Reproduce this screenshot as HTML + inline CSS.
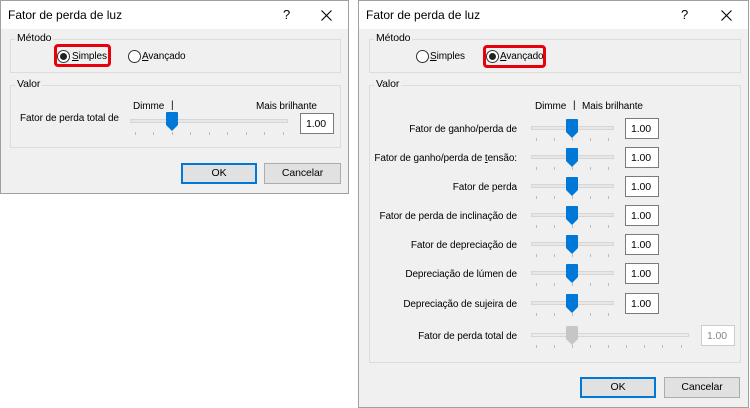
<!DOCTYPE html>
<html><head><meta charset="utf-8"><style>
*{margin:0;padding:0;box-sizing:border-box}
body{width:750px;height:408px;background:#fff;position:relative;overflow:hidden;font-family:"Liberation Sans",sans-serif;font-size:10px;letter-spacing:-0.1px;color:#000}
.a{position:absolute;white-space:nowrap}
.dlg{position:absolute;background:#f0f0f0;border:1px solid #a0a0a0}
.tb{position:absolute;left:0;top:0;right:0;height:28px;background:#fff}
.title{position:absolute;left:7px;top:7px;font-size:12px;letter-spacing:0}
.grp{position:absolute;border:1px solid #dcdcdc}
.lg{position:absolute;background:#f0f0f0;padding:0 2px;font-size:10.5px}
.radio{position:absolute;width:13px;height:13px;border:1px solid #333;border-radius:50%;background:#fff}
.radio.on::after{content:"";position:absolute;left:2px;top:2px;width:7px;height:7px;border-radius:50%;background:#222}
.red{position:absolute;border:3px solid #e8000b;border-radius:4px}
.track{position:absolute;height:4px;background:#e7e7e7;border:1px solid #d6d6d6}
.tick{position:absolute;width:1px;height:3px;background:#bbb}
.tbx{position:absolute;width:34px;height:21px;background:#fff;border:1px solid #7a7a7a;padding:4px 0 0 5px;font-size:10.5px}
.btn{position:absolute;height:21px;background:#e1e1e1;border:1px solid #adadad;text-align:center;line-height:19px;font-size:10.5px}
.btn.ok{border:2px solid #0078d7;line-height:17px}
</style></head><body>

<div class="dlg" style="left:0;top:0;width:349px;height:194px">
  <div class="tb"></div>
  <div class="title">Fator de perda de luz</div>
  <div class="a" style="left:282px;top:6px;font-size:13px">?</div>
  <svg class="a" style="left:320px;top:9px" width="11" height="11"><path d="M0.5 0.5L10.5 10.5M10.5 0.5L0.5 10.5" stroke="#000" stroke-width="1.1"/></svg>
  <div class="grp" style="left:9px;top:38px;width:331px;height:34px"></div>
  <div class="lg" style="left:14px;top:31px">Método</div>
  <div class="red" style="left:53px;top:43px;width:57px;height:23px"></div>
  <div class="radio on" style="left:56px;top:49px"></div>
  <div class="a" style="left:71px;top:50px"><u>S</u>imples</div>
  <div class="radio" style="left:127px;top:49px"></div>
  <div class="a" style="left:141px;top:50px"><u>A</u>vançado</div>
  <div class="grp" style="left:9px;top:84px;width:331px;height:63px"></div>
  <div class="lg" style="left:14px;top:77px">Valor</div>
  <div class="a" style="left:19px;top:112px">Fator de perda total de</div>
  <div class="a" style="left:132px;top:100px">Dimme</div>
  <div class="a" style="left:170px;top:99px">|</div>
  <div class="a" style="left:255px;top:100px">Mais brilhante</div>
  <div class="track" style="left:129px;top:118px;width:158px"></div>
  <svg class="a" style="left:165px;top:111px" width="12" height="19"><path d="M0 1Q0 0 1 0H11Q12 0 12 1V13L6 19L0 13Z" fill="#0078d7"/></svg>
  <div class="tick" style="left:134px;top:131px"></div><div class="tick" style="left:152px;top:131px"></div><div class="tick" style="left:171px;top:131px"></div><div class="tick" style="left:189px;top:131px"></div><div class="tick" style="left:208px;top:131px"></div><div class="tick" style="left:226px;top:131px"></div><div class="tick" style="left:245px;top:131px"></div><div class="tick" style="left:263px;top:131px"></div><div class="tick" style="left:282px;top:131px"></div>
  <div class="tbx" style="left:299px;top:112px">1.00</div>
  <div class="btn ok" style="left:180px;top:162px;width:76px">OK</div>
  <div class="btn" style="left:263px;top:162px;width:77px">Cancelar</div>
</div>

<div class="dlg" style="left:358px;top:0;width:391px;height:408px">
  <div class="tb"></div>
  <div class="title">Fator de perda de luz</div>
  <div class="a" style="left:322px;top:6px;font-size:13px">?</div>
  <svg class="a" style="left:362px;top:9px" width="11" height="11"><path d="M0.5 0.5L10.5 10.5M10.5 0.5L0.5 10.5" stroke="#000" stroke-width="1.1"/></svg>
  <div class="grp" style="left:10px;top:38px;width:372px;height:34px"></div>
  <div class="lg" style="left:15px;top:31px">Método</div>
  <div class="radio" style="left:57px;top:49px"></div>
  <div class="a" style="left:71px;top:50px"><u>S</u>imples</div>
  <div class="red" style="left:124px;top:44px;width:63px;height:23px"></div>
  <div class="radio on" style="left:127px;top:49px"></div>
  <div class="a" style="left:141px;top:50px"><u>A</u>vançado</div>
  <div class="grp" style="left:10px;top:84px;width:372px;height:278px"></div>
  <div class="lg" style="left:15px;top:77px">Valor</div>
  <div class="a" style="left:176px;top:100px">Dimme</div>
  <div class="a" style="left:214px;top:99px">|</div>
  <div class="a" style="left:223px;top:100px">Mais brilhante</div>
</div>

<div id="rows"></div>
<script>
var rows=[["Fator de ganho/perda de",128],["Fator de ganho/perda de <u>t</u>ensão:",157],["Fator de perda",186],["Fator de perda de inclinação de",215],["Fator de depreciação de",244],["Depreciação de lúmen de",273],["Depreciação de sujeira de",303]];
var h="";
rows.forEach(function(r){var y=r[1];
h+='<div class="a" style="right:233px;top:'+(y-4)+'px">'+r[0]+'</div>';
h+='<div class="track" style="left:531px;top:'+(y-2)+'px;width:83px"></div>';
h+='<svg class="a" style="left:566px;top:'+(y-9)+'px" width="12" height="19"><path d="M0 1Q0 0 1 0H11Q12 0 12 1V13L6 19L0 13Z" fill="#0078d7"/></svg>';
[536,554,572,590,608].forEach(function(x){h+='<div class="tick" style="left:'+x+'px;top:'+(y+10)+'px"></div>'});
h+='<div class="tbx" style="left:625px;top:'+(y-10)+'px">1.00</div>';
});
var y=335;
h+='<div class="a" style="right:233px;top:'+(y-4)+'px">Fator de perda total de</div>';
h+='<div class="track" style="left:531px;top:'+(y-2)+'px;width:158px;background:#ececec"></div>';
h+='<svg class="a" style="left:566px;top:'+(y-9)+'px" width="12" height="19"><path d="M0 1Q0 0 1 0H11Q12 0 12 1V13L6 19L0 13Z" fill="#c6c6c6"/></svg>';
[536,554,572,590,608,626,644,662,681].forEach(function(x){h+='<div class="tick" style="left:'+x+'px;top:'+(y+10)+'px"></div>'});
h+='<div class="tbx" style="left:701px;top:'+(y-10)+'px;border-color:#ccc;color:#888">1.00</div>';
h+='<div class="btn ok" style="left:580px;top:377px;width:76px">OK</div>';
h+='<div class="btn" style="left:664px;top:377px;width:76px">Cancelar</div>';
document.getElementById("rows").innerHTML=h;
</script>
</body></html>
